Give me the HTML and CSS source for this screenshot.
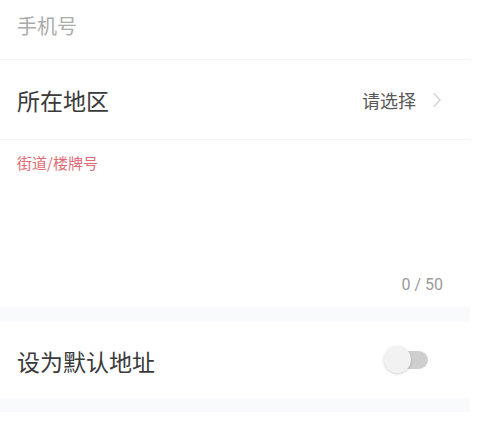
FILE: index.html
```html
<!DOCTYPE html>
<html lang="zh">
<head>
<meta charset="utf-8">
<link rel="stylesheet" href="styles.css">
</head>
<body>
<div class="form">
  <div class="row row-phone">
    <span class="placeholder">手机号</span>
  </div>
  <div class="row row-region">
    <span class="label">所在地区</span>
    <span class="picker">
      <span class="picker-text">请选择</span>
      <svg class="chevron" width="10" height="16" viewBox="0 0 10 16"><path d="M2 1.5 L8 8 L2 14.5" fill="none" stroke="#d6d6d6" stroke-width="1.6"/></svg>
    </span>
  </div>
  <div class="area">
    <span class="area-hint">街道/楼牌号</span>
    <span class="counter">0 / 50</span>
  </div>
  <div class="gap"></div>
  <div class="row row-default">
    <span class="label">设为默认地址</span>
    <span class="switch"><span class="track"></span><span class="knob"></span></span>
  </div>
  <div class="gap gap-bottom"></div>
</div>
</body>
</html>
```

FILE: styles.css
```css
html, body {
  margin: 0;
  padding: 0;
  background: #ffffff;
}
body {
  font-family: "Noto Sans CJK SC", "Noto Sans", Roboto, sans-serif;
}
.form {
  width: 470px;
  background: #ffffff;
}
.row {
  display: flex;
  align-items: center;
  justify-content: space-between;
  padding: 0 30px 0 17px;
  border-bottom: 1px solid #f3f3f3;
}
.row-phone {
  box-sizing: border-box;
  height: 60px;
  padding-bottom: 7px;
}
.placeholder {
  font-size: 20px;
  line-height: 24px;
  color: #ababab;
}
.row-region {
  height: 79px;
}
.label {
  font-size: 23px;
  line-height: 28px;
  color: #3a3a3a;
}
.picker {
  display: flex;
  align-items: center;
  gap: 16px;
  margin-right: -2px;
}
.picker-text {
  font-size: 18px;
  line-height: 22px;
  color: #585858;
}
.chevron {
  display: block;
}
.area {
  height: 167px;
  box-sizing: border-box;
  padding: 13px 27px 12px 17px;
  display: flex;
  flex-direction: column;
  justify-content: space-between;
}
.area-hint {
  font-size: 15px;
  line-height: 20px;
  color: #e26a76;
}
.counter {
  align-self: flex-end;
  font-family: Roboto, "Noto Sans", sans-serif;
  font-size: 16px;
  line-height: 20px;
  color: #9a9a9a;
}
.gap {
  height: 15px;
  background: #f9fafc;
}
.row-default {
  height: 76px;
  border-bottom: none;
  padding-right: 42px;
}
.row-default .label {
  position: relative;
  top: 1px;
}
.switch {
  position: relative;
  width: 44px;
  height: 28px;
}
.track {
  position: absolute;
  left: 8px;
  top: 5px;
  width: 36px;
  height: 18px;
  border-radius: 9px;
  background: #cfcfcf;
}
.knob {
  position: absolute;
  left: 0;
  top: 0;
  width: 27px;
  height: 27px;
  border-radius: 50%;
  background: #f2f2f2;
  box-shadow: 0 1px 3px rgba(0,0,0,0.18);
}
.gap-bottom {
  height: 14px;
}
```
